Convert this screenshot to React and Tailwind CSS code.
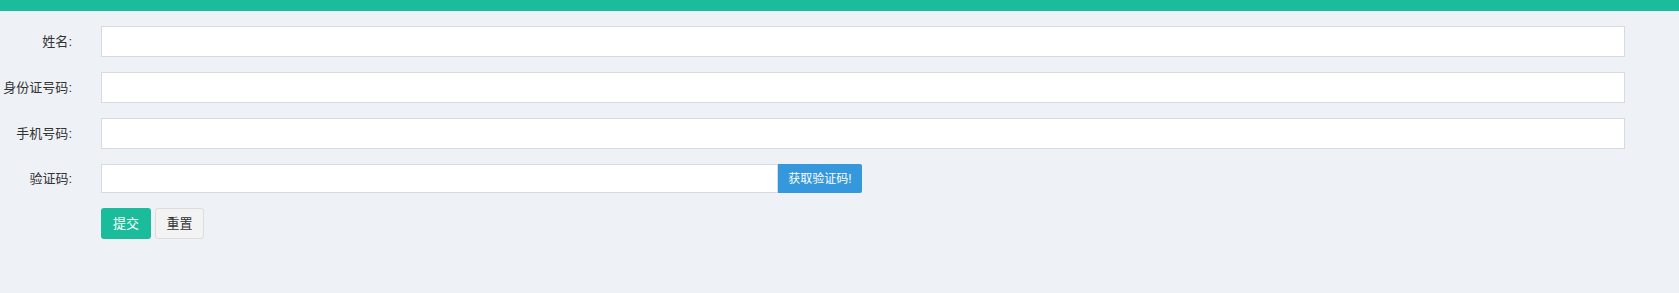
import React, { useState } from 'react';

const labelCls = 'w-[72px] shrink-0 text-right text-[13px] text-[#333]';
const inputCls =
  'h-full w-full border border-[#d5dae1] bg-white px-3 text-[13px] text-[#333] outline-none focus:border-[#93a1bb]';

const Field = ({ label, value, onChange }) => (
  <div className="flex h-[31px] items-center">
    <label className={labelCls}>{label}:</label>
    <div className="ml-[29px] h-full flex-1">
      <input type="text" value={value} onChange={onChange} className={inputCls} />
    </div>
  </div>
);

const App = () => {
  const [form, setForm] = useState({ name: '', idCard: '', phone: '', code: '' });

  const update = (key) => (e) => setForm({ ...form, [key]: e.target.value });
  const reset = () => setForm({ name: '', idCard: '', phone: '', code: '' });

  return (
    <div
      className="h-[293px] bg-[#eef1f5]"
      style={{ fontFamily: '"Liberation Sans", "Noto Sans CJK SC", sans-serif' }}
    >
      <div className="h-[11px] bg-[#1abc9c]"></div>

      <form className="flex flex-col gap-[15px] pr-[54px] pt-[15px]" onSubmit={(e) => e.preventDefault()}>
        <Field label="姓名" value={form.name} onChange={update('name')} />
        <Field label="身份证号码" value={form.idCard} onChange={update('idCard')} />
        <Field label="手机号码" value={form.phone} onChange={update('phone')} />

        <div className="flex h-[29px] items-center">
          <label className={labelCls}>验证码:</label>
          <div className="ml-[29px] flex h-full">
            <input
              type="text"
              value={form.code}
              onChange={update('code')}
              className="h-full w-[677px] border border-[#d5dae1] bg-white px-3 text-[13px] text-[#333] outline-none"
            />
            <button
              type="button"
              className="h-full w-[84px] rounded-r-[2px] bg-[#3598dc] text-[12px] text-white hover:bg-[#217ebd]"
            >
              获取验证码!
            </button>
          </div>
        </div>

        <div className="flex gap-[4px] pl-[101px]">
          <button
            type="submit"
            className="h-[31px] w-[50px] rounded-[3px] bg-[#1abc9c] text-[13px] text-white hover:bg-[#16a085]"
          >
            提交
          </button>
          <button
            type="button"
            onClick={reset}
            className="h-[31px] w-[49px] rounded-[3px] border border-[#dcdcdc] bg-[#f3f3f3] text-[13px] text-[#333] hover:bg-[#e6e6e6]"
          >
            重置
          </button>
        </div>
      </form>
    </div>
  );
};

export default App;
